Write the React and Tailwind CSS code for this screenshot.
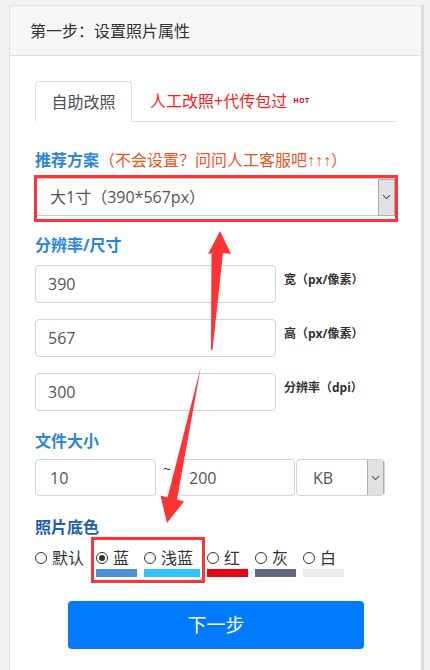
import React from "react";

const FONT = "font-['Open_Sans','Noto_Sans_CJK_SC',sans-serif]";

function Chevron() {
  return (
    <svg width="9" height="6" viewBox="0 0 9 6" fill="none">
      <path d="M1 1.2 L4.5 4.6 L8 1.2" stroke="#555" strokeWidth="1.1" />
    </svg>
  );
}

function Radio({ checked }) {
  return (
    <span className="w-[12px] h-[12px] rounded-full border border-[#333] bg-white flex items-center justify-center shrink-0">
      {checked && <span className="w-[6px] h-[6px] rounded-full bg-[#333]" />}
    </span>
  );
}

function ColorOpt({ label, color, barW, checked }) {
  return (
    <div className="flex flex-col" style={{ width: barW }}>
      <div className="flex items-center h-[22px] gap-[5px]">
        <Radio checked={checked} />
        <span className="text-[16px] leading-[22px] text-[#333] whitespace-nowrap">{label}</span>
      </div>
      <div className={`h-[8px] ${color}`} style={{ width: barW }} />
    </div>
  );
}

function InputRow({ value, label }) {
  return (
    <div className="flex items-start">
      <div className="w-[241px] h-[38px] border border-[#ced4da] rounded-[4px] flex items-center pl-[12px] text-[16px] text-[#555]">
        {value}
      </div>
      <div className="ml-[8px] mt-[7px] text-[12px] leading-[16px] font-bold text-[#333] whitespace-nowrap">
        {label}
      </div>
    </div>
  );
}

export default function App() {
  return (
    <div className={`relative w-[430px] h-[670px] overflow-hidden bg-[#f2f2f2] ${FONT}`}>
      <div className="ml-[9px] mt-[5px] w-[415px] h-[700px] bg-white border-l border-t border-[#e3e3e3] border-r-[3px] border-r-[#dcdcdc]">
        <div className="h-[50px] bg-[#f6f6f6] border-b border-[#dedede] flex items-center pl-[20px] text-[16px] text-[#333]">
          第一步：设置照片属性
        </div>
        <div className="pl-[25px] pr-[24px]">
          {/* tabs */}
          <div className="mt-[25px] h-[41px] flex items-end border-b border-[#dee2e6]">
            <div className="-mb-px w-[97px] h-[41px] border border-[#dee2e6] border-b-white rounded-t-[4px] bg-white flex items-center justify-center text-[16px] text-[#495057]">
              自助改照
            </div>
            <div className="ml-[18px] h-[40px] flex items-center">
              <span className="text-[16px] text-[#ff1a1a]">人工改照+代传包过</span>
              <span className="ml-[6px] text-[7px] font-bold text-[#e4002b] tracking-[0.5px]">HOT</span>
            </div>
          </div>

          {/* 推荐方案 */}
          <div className="mt-[27px] h-[22px] leading-[22px] text-[16px] whitespace-nowrap">
            <span className="font-bold text-[#2b85d8]">推荐方案</span>
            <span className="text-[#f4511e]">
              （不会设置？问问人工客服吧
              <span className="font-['Liberation_Sans',sans-serif] text-[16px]">↑↑↑</span>）
            </span>
          </div>
          <div className="mt-[4px] -ml-px w-[364px] h-[47px] border-[3px] border-[#ff3333] pb-[3px]">
            <div className="h-[38px] border-b border-t border-[#c8ccd0] flex items-center justify-between bg-white">
              <span className="pl-[13px] text-[16px] text-[#555]">大1寸（390*567px）</span>
              <span className="w-[17px] h-[37px] bg-[#e1e1e1] border border-[#adadad] flex items-center justify-center">
                <Chevron />
              </span>
            </div>
          </div>

          {/* 分辨率/尺寸 */}
          <div className="mt-[12px] h-[22px] leading-[22px] text-[16px] font-bold text-[#2b85d8]">分辨率/尺寸</div>
          <div className="mt-[9px] flex flex-col gap-[16px]">
            <InputRow value="390" label="宽（px/像素）" />
            <InputRow value="567" label="高（px/像素）" />
            <InputRow value="300" label="分辨率（dpi）" />
          </div>

          {/* 文件大小 */}
          <div className="mt-[19px] h-[22px] leading-[22px] text-[16px] font-bold text-[#2b85d8]">文件大小</div>
          <div className="mt-[7px] flex items-start">
            <div className="w-[121px] h-[37px] border border-[#ced4da] rounded-[4px] flex items-center pl-[14px] text-[16px] text-[#555]">
              10
            </div>
            <div className="w-[22px] text-center text-[14px] text-[#333] leading-[20px]">~</div>
            <div className="w-[117px] h-[37px] border border-[#ced4da] rounded-[4px] flex items-center pl-[10px] text-[16px] text-[#555]">
              200
            </div>
            <div className="ml-px w-[89px] h-[37px] border border-[#ced4da] rounded-[4px] flex items-center justify-between text-[16px] text-[#555] overflow-hidden">
              <span className="pl-[16px]">KB</span>
              <span className="w-[17px] h-[37px] bg-[#e1e1e1] border border-[#adadad] flex items-center justify-center">
                <Chevron />
              </span>
            </div>
          </div>

          {/* 照片底色 */}
          <div className="mt-[20px] h-[22px] leading-[22px] text-[16px] font-bold text-[#1d5ea9]">照片底色</div>
          <div className="relative mt-[9px] flex items-start">
            <div className="flex items-center h-[22px] gap-[5px] mr-[12px]">
              <Radio />
              <span className="text-[16px] leading-[22px] text-[#333]">默认</span>
            </div>
            <div className="flex gap-[7px]">
              <ColorOpt label="蓝" color="bg-[#4a8fdc]" barW={41} checked />
              <ColorOpt label="浅蓝" color="bg-[#2ec4fb]" barW={56} />
              <ColorOpt label="红" color="bg-[#e30815]" barW={41} />
              <ColorOpt label="灰" color="bg-[#646a7e]" barW={41} />
              <ColorOpt label="白" color="bg-[#ececec]" barW={41} />
            </div>
            <div className="absolute left-[56px] top-[-10px] w-[114px] h-[46px] border-[3px] border-[#ff3333]" />
          </div>

          <button className="mt-[24px] mx-auto flex items-center justify-center w-[296px] h-[48px] rounded-[4px] bg-[#007bff] text-white text-[19px]">
            下一步
          </button>
        </div>
      </div>

      {/* annotation arrows */}
      <svg className="absolute left-0 top-0 pointer-events-none" width="430" height="670" viewBox="0 0 430 670">
        <polygon points="220,231 231,254 223,253 212.5,350 211,350 211.5,253 208,254" fill="#ff3333" />
        <polygon points="201,366 177,499.5 184,501.5 167,523 160.5,495.5 167.5,497.5" fill="#ff3333" />
      </svg>
    </div>
  );
}
